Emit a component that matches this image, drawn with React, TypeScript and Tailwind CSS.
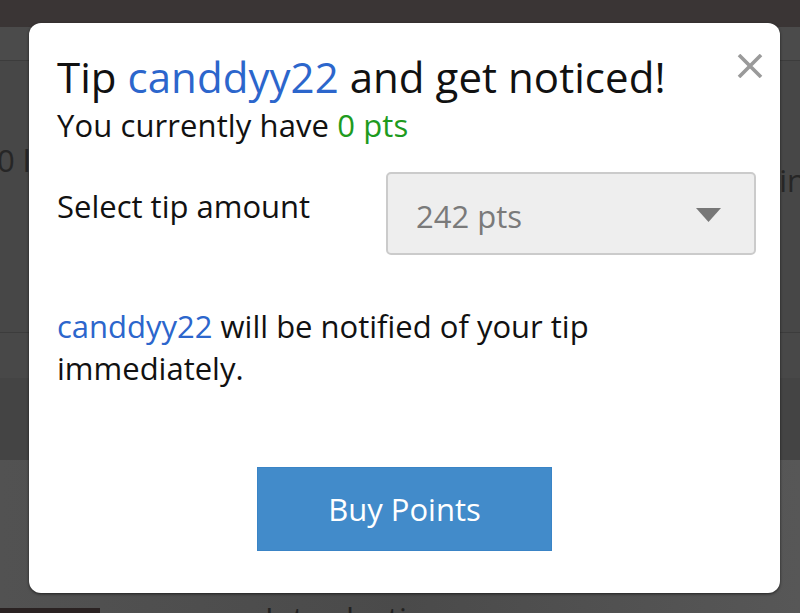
import React from "react";

const font = { fontFamily: '"Open Sans", "Noto Sans", sans-serif' };

const CloseIcon: React.FC = () => (
  <svg width="26" height="24" viewBox="0 0 26 24" fill="none">
    <path d="M2 1 L24 23 M24 1 L2 23" stroke="#9a9a9a" strokeWidth="3.6" />
  </svg>
);

const App: React.FC = () => {
  return (
    <div
      className="relative w-[800px] h-[613px] overflow-hidden bg-[#4a4a4a]"
      style={font}
    >
      {/* Dimmed page behind the modal */}
      <div className="flex flex-col h-full">
        <div className="h-[27px] bg-[#3a3535]" />
        <div className="h-[34px] bg-[#4b4b4b] border-b border-[#3c3c3c]" />
        <div className="h-[272px] bg-[#474747] border-b border-[#3c3c3c] flex flex-col">
          <div className="h-[78px]" />
          <div className="flex justify-between items-start text-[31px] leading-[42px] text-[#262626]">
            <span className="-ml-[3px]">0 l</span>
            <span className="mt-[20px] -mr-[6px]">in</span>
          </div>
        </div>
        <div className="h-[45px] bg-[#484848]" />
        <div className="h-[82px] bg-[#444444]" />
        <div className="flex-1 bg-gradient-to-r from-[#525252] via-[#4a4a4a] to-[#575757] flex flex-col justify-end">
          <div className="flex items-end">
            <div className="w-[100px] h-[5px] bg-[#2a2222]" />
            <span className="ml-[165px] -mb-[26px] text-[31px] leading-[42px] text-[#222]">
              Introduction
            </span>
          </div>
        </div>
      </div>

      {/* Modal */}
      <div className="absolute left-[29px] top-[23px] w-[751px] h-[570px] rounded-[12px] bg-white shadow-[0_1px_3px_rgba(0,0,0,0.6)] pl-[28px] pr-[24px] pt-[29px] text-[#111]">
        <button className="absolute right-[17px] top-[31px]">
          <CloseIcon />
        </button>

        <h1 className="text-[42px] leading-[50px] tracking-[0.05px]">
          Tip <span className="text-[#2c66cc]">canddyy22</span> and get noticed!
        </h1>
        <p className="mt-[2px] text-[31px] leading-[42px] tracking-[0.1px]">
          You currently have <span className="text-[#1e9b1e]">0 pts</span>
        </p>

        <div className="mt-[26px] flex items-start">
          <span className="w-[329px] mt-[13px] text-[31px] leading-[42px]">
            Select tip amount
          </span>
          <div className="w-[370px] h-[83px] rounded-[5px] border-2 border-[#cbcbcb] bg-[#eeeeee] flex items-center justify-between pl-[28px] pr-[33px] pt-[4px]">
            <span className="text-[31px] leading-[42px] text-[#7a7a7a]">242 pts</span>
            <svg width="25" height="14" viewBox="0 0 25 14" className="-mt-[2px]">
              <path d="M0 0 H25 L12.5 14 Z" fill="#777777" />
            </svg>
          </div>
        </div>

        <p className="mt-[50px] text-[31px] leading-[42px] w-[600px]">
          <span className="text-[#2c66cc]">canddyy22</span> will be notified of your tip immediately.
        </p>

        <div className="mt-[78px] flex justify-center pr-[4px]">
          <button className="w-[295px] h-[84px] bg-[#428bca] border border-[#3a84c6] text-white text-[31px] leading-[42px] flex items-center justify-center">
            Buy Points
          </button>
        </div>
      </div>
    </div>
  );
};

export default App;
